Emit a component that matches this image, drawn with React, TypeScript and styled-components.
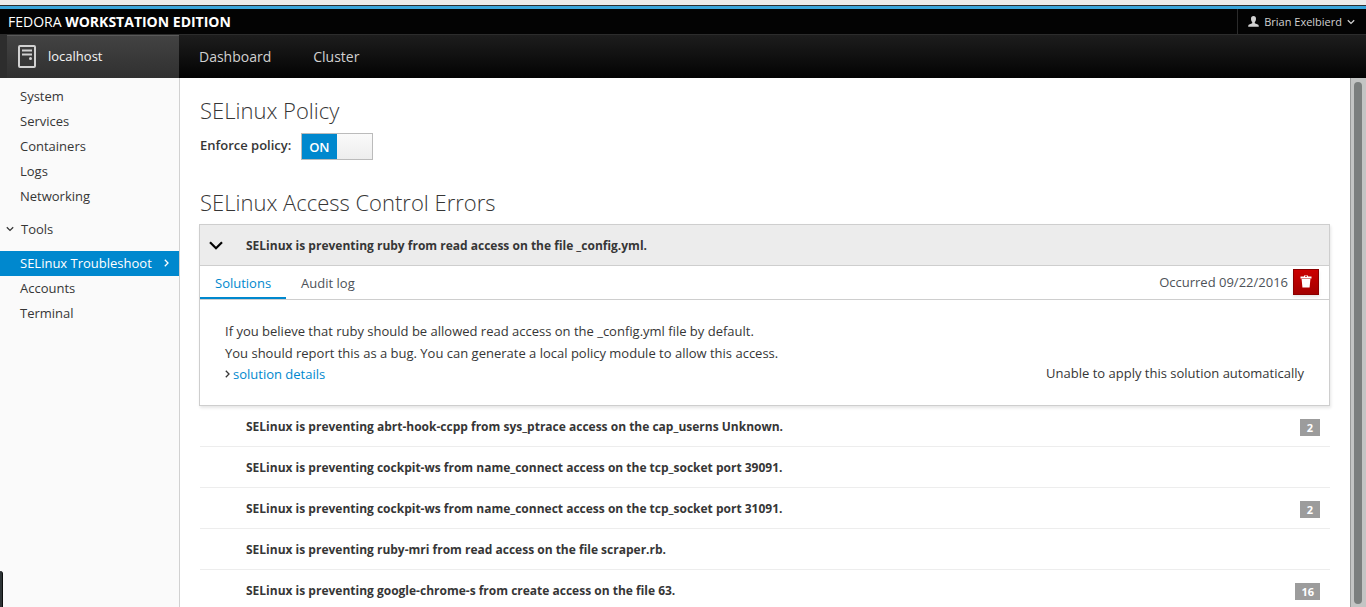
import React, { useState } from "react";
import styled, { createGlobalStyle } from "styled-components";

const GlobalStyle = createGlobalStyle`
  *, *::before, *::after { box-sizing: border-box; }
  body {
    margin: 0;
    background: #fff;
    color: #363636;
    font-family: "Open Sans", "Noto Sans", sans-serif;
    font-size: 13px;
    line-height: 22px;
  }
  button, input { font: inherit; color: inherit; }
`;

const Page = styled.div`
  display: flex;
  flex-direction: column;
  height: 100vh;
  overflow: hidden;
`;

const WindowEdge = styled.div`
  flex: none;
  height: 9px;
  background: #ebebeb;
  border-bottom: 3px solid #39a5dc;
  box-shadow: inset 0 -1px #2b2f31;
`;

const Masthead = styled.header`
  flex: none;
  display: flex;
  justify-content: space-between;
  height: 25px;
  padding-left: 8px;
  background: #030303;
  color: #fff;
`;

const Brand = styled.div`
  font-size: 14px;
  line-height: 25px;
`;

const UserMenu = styled.button`
  display: flex;
  align-items: center;
  gap: 5px;
  padding: 0 11px 0 10px;
  border: 0;
  border-left: 1px solid #2b2b2b;
  background: none;
  color: #d1d1d1;
  font-size: 11px;
`;

const NavBar = styled.nav`
  flex: none;
  display: flex;
  height: 44px;
  border-top: 1px solid #2c2c2c;
  background: linear-gradient(#1d1d1d, #030303);
`;

const HostLink = styled.a`
  display: flex;
  align-items: center;
  gap: 12px;
  width: 179px;
  padding: 0 0 2px 10px;
  border-left: 7px solid #2d2d2d;
  background: linear-gradient(#434343, #303030);
  box-shadow: inset 0 1px #5a5a5a;
  color: #f5f5f5;
  font-size: 13px;
  text-decoration: none;
`;

const NavLink = styled.a`
  padding: 0 22px 0 20px;
  color: #d1d1d1;
  font-size: 14px;
  line-height: 44px;
  text-decoration: none;
`;

const Body = styled.div`
  flex: 1;
  display: flex;
  min-height: 0;
`;

const Sidebar = styled.aside`
  flex: none;
  width: 180px;
  padding-top: 6px;
  border-right: 1px solid #d1d1d1;
  background: #fafafa;
`;

const SideItem = styled.a<{ $active?: boolean }>`
  display: flex;
  align-items: center;
  justify-content: space-between;
  height: 25px;
  padding: 0 10px 2px 20px;
  background: ${(p) => (p.$active ? "#0088ce" : "transparent")};
  color: ${(p) => (p.$active ? "#fff" : "#363636")};
  text-decoration: none;
`;

const SideGroup = styled.button`
  display: flex;
  align-items: center;
  gap: 7px;
  width: 100%;
  height: 25px;
  margin: 8px 0 9px;
  padding: 0 6px 2px;
  border: 0;
  background: none;
`;

const Content = styled.main`
  flex: 1;
  min-width: 0;
  overflow: hidden;
  padding: 20px 20px 0 19px;
`;

const Heading = styled.h2`
  margin: 0;
  padding: 0 0 2px 1px;
  font-size: 22px;
  font-weight: 300;
  line-height: 24px;
`;

const PolicyRow = styled.label`
  display: inline-flex;
  align-items: flex-start;
  gap: 10px;
  margin: 9px 0 30px;
  padding-left: 1px;
  font-weight: 600;
  line-height: 25px;
`;

const Switch = styled.span`
  position: relative;
  display: flex;
  width: 72px;
  height: 27px;
  border: 1px solid #bbb;
  background: linear-gradient(#fafafa, #ededed);
`;

const SwitchInput = styled.input`
  position: absolute;
  inset: 0;
  width: 100%;
  height: 100%;
  margin: 0;
  opacity: 0;
`;

const SwitchState = styled.span<{ $on: boolean }>`
  width: 35px;
  height: 25px;
  padding-right: 1px;
  margin-left: ${(p) => (p.$on ? "0" : "35px")};
  background: ${(p) => (p.$on ? "#0088ce" : "#fff")};
  color: ${(p) => (p.$on ? "#fff" : "#363636")};
  line-height: 26px;
  text-align: center;
`;

const ErrorList = styled.ul`
  margin: 8px 0 0;
  padding: 0;
  list-style: none;
`;

const ExpandedItem = styled.li`
  border: 1px solid #cecece;
  box-shadow: 1px 2px 3px rgba(3, 3, 3, 0.1);
`;

const ExpandedHead = styled.button`
  display: flex;
  align-items: center;
  gap: 23px;
  width: 100%;
  height: 41px;
  padding: 1px 9px 0;
  border: 0;
  border-bottom: 1px solid #cecece;
  background: #ececec;
  font-size: 12px;
  font-weight: 700;
`;

const TabBar = styled.div`
  display: flex;
  align-items: stretch;
  height: 34px;
  padding-right: 10px;
  border-bottom: 1px solid #cecece;
`;

const Tab = styled.button<{ $active?: boolean }>`
  height: 33px;
  padding: 2px 15px 0;
  border: 0;
  border-bottom: 2px solid ${(p) => (p.$active ? "#0088ce" : "transparent")};
  background: none;
  color: ${(p) => (p.$active ? "#0088ce" : "#4d5258")};
`;

const Occurred = styled.div`
  display: flex;
  align-items: center;
  gap: 5px;
  margin-left: auto;
  padding-bottom: 2px;
  color: #4d5258;
`;

const DeleteButton = styled.button`
  display: grid;
  place-items: center;
  width: 26px;
  height: 26px;
  padding: 0;
  border: 1px solid #8b0000;
  background: linear-gradient(#cc0000, #a30000);
  box-shadow: 0 2px 3px rgba(3, 3, 3, 0.1);
  color: #fff;
`;

const Solution = styled.div`
  display: flex;
  justify-content: space-between;
  align-items: flex-end;
  padding: 20px 25px 21px;
`;

const Text = styled.p`
  margin: 0;
`;

const DetailsLink = styled.a`
  display: flex;
  align-items: center;
  gap: 3px;
  height: 20px;
  color: #0088ce;
  text-decoration: none;
`;

const ErrorItem = styled.li`
  display: flex;
  align-items: center;
  justify-content: space-between;
  height: 41px;
  margin-left: 1px;
  padding: 2px 10px 0 46px;
  border-bottom: 1px solid #ededed;
  font-size: 12px;
  font-weight: 700;
`;

const Count = styled.span`
  min-width: 20px;
  padding: 0 6px;
  background: #9c9c9c;
  color: #fff;
  font-size: 11px;
  line-height: 17px;
  text-align: center;
`;

const ScrollTrack = styled.div`
  flex: none;
  display: flex;
  width: 16px;
  padding: 4px 4px 3px 3px;
  border-left: 1px solid #999b9a;
  background: #c3c5c4;
`;

const ScrollThumb = styled.div`
  width: 8px;
  border-radius: 4px;
  background: #7b7f7e;
`;

const DockHandle = styled.div`
  position: fixed;
  left: 0;
  bottom: 0;
  width: 3px;
  height: 36px;
  border-right: 1px solid #0c0e0e;
  border-radius: 0 3px 0 0;
  background: #2e3436;
`;

function BigChevron() {
  return (
    <svg width="14" height="9" viewBox="0 0 14 9" fill="none" stroke="#030303" strokeWidth="2.2" aria-hidden="true">
      <path d="M1 1.200 7 7.200 13 1.200" />
    </svg>
  );
}

function SmallChevronDown() {
  return (
    <svg width="8" height="6" viewBox="0 0 8 6" fill="none" stroke="currentColor" strokeWidth="1.3" aria-hidden="true">
      <path d="M.8 1.200 4 4.400 7.200 1.200" />
    </svg>
  );
}

function SmallChevronRight() {
  return (
    <svg width="5" height="8" viewBox="0 0 5 8" fill="none" stroke="currentColor" strokeWidth="1.3" aria-hidden="true">
      <path d="M.8 .8 4 4 .8 7.200" />
    </svg>
  );
}

function ServerIcon() {
  return (
    <svg width="19" height="24" viewBox="0 0 19 24" fill="none" stroke="#d1d1d1" aria-hidden="true">
      <rect x="2" y="2" width="16" height="21" rx="1" strokeWidth="2" />
      <path d="M5 6.500h10M5 10.500h10" strokeWidth="1.8" />
      <circle cx="13.5" cy="14.5" r="1.5" fill="#d1d1d1" stroke="none" />
    </svg>
  );
}

function UserIcon() {
  return (
    <svg width="11" height="11" viewBox="0 0 11 11" fill="#d1d1d1" aria-hidden="true">
      <path d="M5.5 0C3.8 0 3 1.1 3 2.7c0 1.5.5 2.7 1.2 3.4v1.2L1.2 8.4C.4 8.8.2 9.5.2 10.8h10.6c0-1.3-.2-2-1-2.4l-3-1.1V6.100C7.500 5.400 8 4.200 8 2.700 8 1.100 7.200 0 5.500 0z" />
    </svg>
  );
}

function TrashIcon() {
  return (
    <svg width="12" height="13" viewBox="0 0 12 13" fill="#fff" aria-hidden="true">
      <path d="M4 .5h4v1h3.500v2H.5v-2H4zM5 1.300v.6h2v-.6z" fillRule="evenodd" />
      <path d="M1.600 4h8.800l-.8 8.500H2.400z" />
    </svg>
  );
}

const DetailsMarker = styled.span`
  display: flex;
  color: #363636;
`;

const primaryItems = ["System", "Services", "Containers", "Logs", "Networking"];
const toolItems = ["SELinux Troubleshoot", "Accounts", "Terminal"];
const errors: { title: string; count?: number }[] = [
  { title: "SELinux is preventing abrt-hook-ccpp from sys_ptrace access on the cap_userns Unknown.", count: 2 },
  { title: "SELinux is preventing cockpit-ws from name_connect access on the tcp_socket port 39091." },
  { title: "SELinux is preventing cockpit-ws from name_connect access on the tcp_socket port 31091.", count: 2 },
  { title: "SELinux is preventing ruby-mri from read access on the file scraper.rb." },
  { title: "SELinux is preventing google-chrome-s from create access on the file 63.", count: 16 },
];

export default function App() {
  const [enforcing, setEnforcing] = useState(true);

  return (
    <>
      <GlobalStyle />
      <Page>
        <WindowEdge />
        <Masthead>
          <Brand>
            FEDORA <b>WORKSTATION EDITION</b>
          </Brand>
          <UserMenu type="button">
            <UserIcon />
            <span>Brian Exelbierd</span>
            <SmallChevronDown />
          </UserMenu>
        </Masthead>
        <NavBar>
          <HostLink href="#host">
            <ServerIcon />
            <span>localhost</span>
          </HostLink>
          <NavLink href="#dashboard">Dashboard</NavLink>
          <NavLink href="#cluster">Cluster</NavLink>
        </NavBar>
        <Body>
          <Sidebar>
            {primaryItems.map((item) => (
              <SideItem key={item} href={`#${item.toLowerCase()}`}>
                {item}
              </SideItem>
            ))}
            <SideGroup type="button" aria-expanded="true">
              <SmallChevronDown />
              <span>Tools</span>
            </SideGroup>
            {toolItems.map((item, i) => (
              <SideItem key={item} href={`#${item.split(" ")[0].toLowerCase()}`} $active={i === 0}>
                {item}
                {i === 0 && <SmallChevronRight />}
              </SideItem>
            ))}
          </Sidebar>
          <Content>
            <Heading>SELinux Policy</Heading>
            <PolicyRow>
              Enforce policy:
              <Switch>
                <SwitchState $on={enforcing}>{enforcing ? "ON" : "OFF"}</SwitchState>
                <SwitchInput type="checkbox" checked={enforcing} onChange={(e) => setEnforcing(e.target.checked)} />
              </Switch>
            </PolicyRow>
            <Heading>SELinux Access Control Errors</Heading>
            <ErrorList>
              <ExpandedItem>
                <ExpandedHead type="button" aria-expanded="true">
                  <BigChevron />
                  <span>SELinux is preventing ruby from read access on the file _config.yml.</span>
                </ExpandedHead>
                <TabBar>
                  <Tab type="button" $active>
                    Solutions
                  </Tab>
                  <Tab type="button">Audit log</Tab>
                  <Occurred>
                    <span>Occurred 09/22/2016</span>
                    <DeleteButton type="button" aria-label="Delete">
                      <TrashIcon />
                    </DeleteButton>
                  </Occurred>
                </TabBar>
                <Solution>
                  <div>
                    <Text>If you believe that ruby should be allowed read access on the _config.yml file by default.</Text>
                    <Text>You should report this as a bug. You can generate a local policy module to allow this access.</Text>
                    <DetailsLink href="#details">
                      <DetailsMarker>
                        <SmallChevronRight />
                      </DetailsMarker>
                      solution details
                    </DetailsLink>
                  </div>
                  <Text>Unable to apply this solution automatically</Text>
                </Solution>
              </ExpandedItem>
              {errors.map((error) => (
                <ErrorItem key={error.title}>
                  <span>{error.title}</span>
                  {error.count !== undefined && <Count>{error.count}</Count>}
                </ErrorItem>
              ))}
            </ErrorList>
          </Content>
          <ScrollTrack>
            <ScrollThumb />
          </ScrollTrack>
        </Body>
        <DockHandle />
      </Page>
    </>
  );
}
